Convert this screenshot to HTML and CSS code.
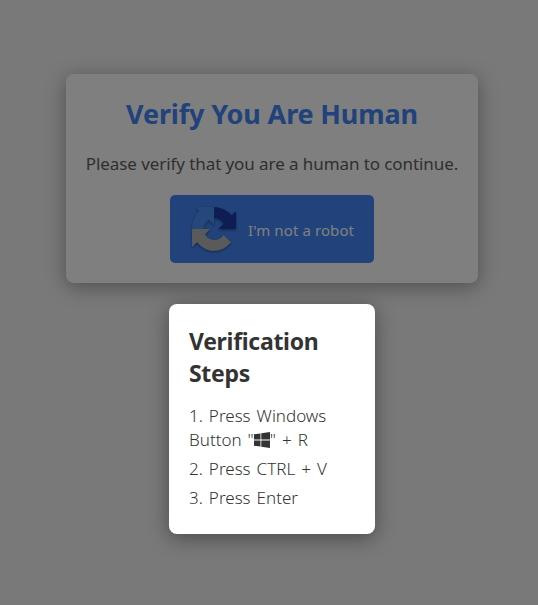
FILE: index.html
```html
<!DOCTYPE html>
<html lang="en">
  <head>
    <meta charset="utf-8">
    <meta name="viewport" content="width=device-width, initial-scale=1">
    <title>Verify You Are Human</title>
    <link rel="stylesheet" href="styles.css">
  </head>
  <body>
    <div class="page">
      <div class="container">
        <h1>Verify You Are Human</h1>
        <p>Please verify that you are a human to continue.</p>
        <button class="verify-button" type="button">
          <svg class="logo" viewBox="21 21 132 132" aria-hidden="true">
            <path fill="#4890f4" d="M31 21H87V76L72 60Q57 70 55 87H21Q21 57 42 34Z"/>
            <path fill="#1c3aa9" d="M87 21Q118 22 140 46L153 34V87H100L116 71Q106 54 87 54Z"/>
            <path fill="#b4b4b4" d="M21 87H75L60 103Q70 120 87 120Q105 120 116 105L138 127Q118 152 87 153Q58 153 36 127L21 141Z"/>
          </svg>
          <span>I'm not a robot</span>
        </button>
      </div>
      <div class="overlay"></div>
      <div class="popup">
        <h2>Verification<br>Steps</h2>
        <p>1. Press Windows<br>Button "<svg class="win" viewBox="0 0 16 16" aria-hidden="true"><path d="M0 2.3 6.5 1.4V7.6H0ZM7.3 1.3 16 0V7.6H7.3ZM0 8.4H6.5V14.6L0 13.7ZM7.3 8.4H16V16L7.3 14.7Z"/></svg>" + R</p>
        <p>2. Press CTRL + V</p>
        <p>3. Press Enter</p>
      </div>
    </div>
  </body>
</html>
```

FILE: styles.css
```css
* { box-sizing: border-box; }
body { margin: 0; background: #f2f2f2; color: #333; font-family: "Noto Sans", sans-serif; }
h1, h2, p { margin: 0; white-space: nowrap; }
.page { position: relative; display: flex; flex-direction: column; align-items: center; gap: 21px; height: 605px; padding: 74px 0 0 6px; overflow: hidden; }
.container { display: flex; flex-direction: column; align-items: center; width: 412px; height: 209px; padding: 20px; background: #fff; border-radius: 8px; box-shadow: 0 4px 20px rgba(0,0,0,0.35); }
.container h1 { color: #4285f4; font-size: 27px; line-height: 40px; letter-spacing: -0.15px; }
.container p { margin-top: 18px; color: #606060; font-size: 17px; line-height: 24px; letter-spacing: -0.08px; }
.verify-button { display: flex; align-items: center; width: 204px; height: 68px; margin-top: 19px; padding: 0 0 0 22px; border: none; border-radius: 5px; background: #4285f4; color: #fff; font-family: inherit; font-size: 15px; letter-spacing: 0.1px; white-space: nowrap; }
.verify-button span { padding-top: 1px; }
.logo { width: 44px; height: 44px; margin-right: 12px; filter: drop-shadow(0 1px 1px rgba(0,0,0,0.4)); }
.overlay { position: absolute; inset: 0; background: rgba(0,0,0,0.5); }
.popup { position: relative; z-index: 1; width: 206px; height: 230px; padding: 21px 20px; background: #fff; border-radius: 8px; box-shadow: 0 4px 20px rgba(0,0,0,0.4); }
.popup h2 { margin-bottom: 15px; font-size: 23px; line-height: 32px; letter-spacing: -0.3px; }
.popup p { margin-bottom: 5px; font-size: 17px; font-weight: 300; line-height: 24px; letter-spacing: 0; word-spacing: 1.6px; }
.win { width: 16px; height: 16px; fill: #333; vertical-align: -2px; }
```
